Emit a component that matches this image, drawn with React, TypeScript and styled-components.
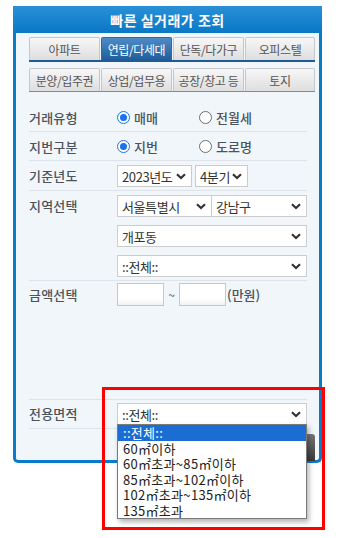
import styled, { createGlobalStyle } from "styled-components";

const GlobalStyle = createGlobalStyle`
  html, body {
    margin: 0;
    padding: 0;
    background: #ffffff;
  }
  body {
    font-family: "Noto Sans CJK KR", "Noto Sans", sans-serif;
  }
`;

const Page = styled.div`
  position: relative;
  width: 347px;
  height: 538px;
  overflow: hidden;
  padding-top: 6px;
  box-sizing: border-box;
`;

const Panel = styled.div`
  margin-left: 13px;
  width: 309px;
  height: 457px;
  box-sizing: border-box;
  border: 3px solid #0a7bc8;
  border-top: none;
  border-radius: 0 0 5px 5px;
  background: #f1f6fa;
`;

const Header = styled.div`
  height: 27px;
  margin: 0 -3px;
  display: flex;
  align-items: center;
  justify-content: center;
  background: linear-gradient(#2990d6, #0a78c6);
  color: #ffffff;
  font-size: 14px;
  font-weight: 700;
  letter-spacing: 0.5px;
`;

const Body = styled.div`
  padding: 4px 0 0 13px;
  width: 286px;
`;

const TabRow = styled.div<{ $line: string; $thick: number }>`
  display: grid;
  grid-template-columns: 71px 71px 71px 70px;
  gap: 1px;
  border-bottom: ${(p) => p.$thick}px solid ${(p) => p.$line};
  margin-bottom: 6px;
`;

const Tab = styled.div<{ $active?: boolean }>`
  height: 23px;
  box-sizing: border-box;
  display: flex;
  align-items: center;
  justify-content: center;
  font-size: 12px;
  letter-spacing: -0.4px;
  border: 1px solid ${(p) => (p.$active ? "#2a6aa8" : "#c4c8cc")};
  border-bottom: none;
  border-radius: 2px 2px 0 0;
  color: ${(p) => (p.$active ? "#ffffff" : "#555555")};
  background: ${(p) =>
    p.$active
      ? "linear-gradient(#4f8cc6, #1f5e9c)"
      : "linear-gradient(#f7f7f7, #dedede)"};
`;

/* margin collapses with the tab row's 6px, so this gives 11px */
const Form = styled.div`
  margin-top: 11px;
  width: 278px;
`;

const Row = styled.div<{ $height?: number; $top?: number }>`
  display: flex;
  align-items: flex-start;
  padding: ${(p) => p.$top ?? 4}px 0 3px;
  border-bottom: 1px solid #dde3e9;
  ${(p) => (p.$height ? `height: ${p.$height}px; box-sizing: border-box;` : "")}
`;

const Label = styled.div<{ $h?: number }>`
  width: 88px;
  flex: none;
  height: ${(p) => p.$h ?? 21}px;
  line-height: ${(p) => p.$h ?? 21}px;
  font-size: 13px;
  font-weight: 500;
  color: #4c535b;
  letter-spacing: 0.2px;
`;

const Controls = styled.div<{ $column?: boolean }>`
  flex: 1;
  display: flex;
  flex-direction: ${(p) => (p.$column ? "column" : "row")};
  align-items: ${(p) => (p.$column ? "stretch" : "center")};
  gap: ${(p) => (p.$column ? "8px" : "3px")};
`;

const RadioOpt = styled.label`
  width: 79px;
  height: 21px;
  display: flex;
  align-items: center;
  gap: 4px;
  font-size: 13px;
  font-weight: 500;
  color: #4c535b;
`;

const RadioDot = styled.span<{ $on?: boolean }>`
  width: 13px;
  height: 13px;
  border-radius: 50%;
  box-sizing: border-box;
  border: 1px solid ${(p) => (p.$on ? "#1a73e8" : "#6f6f6f")};
  background: #ffffff;
  display: flex;
  align-items: center;
  justify-content: center;
  &::after {
    content: "";
    display: ${(p) => (p.$on ? "block" : "none")};
    width: 7px;
    height: 7px;
    border-radius: 50%;
    background: #1a73e8;
  }
`;

const SelectBox = styled.div<{ $w?: number; $joined?: boolean }>`
  position: relative;
  width: ${(p) => (p.$w ? `${p.$w}px` : "auto")};
  height: 22px;
  box-sizing: border-box;
  border: 1px solid #cccccc;
  ${(p) => (p.$joined ? "border-left: none;" : "")}
  background: #ffffff;
  display: flex;
  align-items: center;
  justify-content: space-between;
  padding: 0 5px 0 4px;
  font-size: 13px;
  letter-spacing: -0.4px;
  color: #333333;
  white-space: nowrap;
`;

const Pair = styled.div`
  display: flex;
`;

const Chevron = () => (
  <svg width="10" height="7" viewBox="0 0 10 7" style={{ flex: "none" }}>
    <path d="M1 1.2 L5 5 L9 1.2" fill="none" stroke="#333" strokeWidth="2.2" />
  </svg>
);

const AmountInput = styled.div`
  width: 47px;
  height: 23px;
  box-sizing: border-box;
  border: 1px solid #c8c8c8;
  background: linear-gradient(#ffffff 70%, #eef1f4);
`;

const Tilde = styled.span`
  width: 9px;
  text-align: center;
  font-size: 12px;
  color: #555;
`;

const Unit = styled.span`
  font-size: 13px;
  font-weight: 500;
  color: #4c535b;
  margin-left: -2px;
`;

const ButtonRow = styled.div`
  display: flex;
  justify-content: flex-end;
  margin-top: 5px;
`;

const SearchButton = styled.div`
  width: 110px;
  height: 27px;
  border-radius: 3px 3px 0 0;
  background: linear-gradient(#777777, #3a3a3a);
`;

const DropList = styled.div`
  position: absolute;
  left: -1px;
  right: -1px;
  top: 20px;
  z-index: 3;
  background: #ffffff;
  border: 1px solid #7a7a7a;
  box-shadow: 2px 3px 5px rgba(0, 0, 0, 0.3);
`;

const DropItem = styled.div<{ $sel?: boolean }>`
  height: 15.5px;
  display: flex;
  align-items: center;
  padding-left: 5px;
  font-size: 13px;
  line-height: 1;
  letter-spacing: 0.3px;
  color: ${(p) => (p.$sel ? "#ffffff" : "#222222")};
  background: ${(p) => (p.$sel ? "#1c6dd3" : "transparent")};
`;

const Highlight = styled.div`
  position: absolute;
  left: 102px;
  top: 387px;
  width: 223px;
  height: 143px;
  box-sizing: border-box;
  border: 3px solid #ff0000;
  z-index: 4;
  pointer-events: none;
`;

const tabsTop = ["아파트", "연립/다세대", "단독/다가구", "오피스텔"];
const tabsBottom = ["분양/입주권", "상업/업무용", "공장/창고 등", "토지"];
const areas = [
  "::전체::",
  "60㎡이하",
  "60㎡초과~85㎡이하",
  "85㎡초과~102㎡이하",
  "102㎡초과~135㎡이하",
  "135㎡초과",
];

export default function App() {
  return (
    <Page>
      <GlobalStyle />
      <Panel>
        <Header>빠른 실거래가 조회</Header>
        <Body>
          <TabRow $line="#1f5a94" $thick={2}>
            {tabsTop.map((t) => (
              <Tab key={t} $active={t === "연립/다세대"}>
                {t}
              </Tab>
            ))}
          </TabRow>
          <TabRow $line="#6f8eb0" $thick={1}>
            {tabsBottom.map((t) => (
              <Tab key={t}>{t}</Tab>
            ))}
          </TabRow>

          <Form>
            <Row>
              <Label>거래유형</Label>
              <Controls>
                <RadioOpt>
                  <RadioDot $on />
                  매매
                </RadioOpt>
                <RadioOpt>
                  <RadioDot />
                  전월세
                </RadioOpt>
              </Controls>
            </Row>
            <Row>
              <Label>지번구분</Label>
              <Controls>
                <RadioOpt>
                  <RadioDot $on />
                  지번
                </RadioOpt>
                <RadioOpt>
                  <RadioDot />
                  도로명
                </RadioOpt>
              </Controls>
            </Row>
            <Row>
              <Label>기준년도</Label>
              <Controls>
                <SelectBox $w={75}>
                  2023년도 <Chevron />
                </SelectBox>
                <SelectBox $w={53}>
                  4분기 <Chevron />
                </SelectBox>
              </Controls>
            </Row>
            <Row>
              <Label>지역선택</Label>
              <Controls $column>
                <Pair>
                  <SelectBox $w={95}>
                    서울특별시 <Chevron />
                  </SelectBox>
                  <SelectBox $w={95} $joined>
                    강남구 <Chevron />
                  </SelectBox>
                </Pair>
                <SelectBox>
                  개포동 <Chevron />
                </SelectBox>
                <SelectBox>
                  ::전체:: <Chevron />
                </SelectBox>
              </Controls>
            </Row>
            <Row $height={119} $top={2}>
              <Label $h={23}>금액선택</Label>
              <Controls>
                <AmountInput />
                <Tilde>~</Tilde>
                <AmountInput />
                <Unit>(만원)</Unit>
              </Controls>
            </Row>
            <Row $top={3}>
              <Label>전용면적</Label>
              <Controls $column>
                <SelectBox>
                  ::전체:: <Chevron />
                  <DropList>
                    {areas.map((a, i) => (
                      <DropItem key={a} $sel={i === 0}>
                        {a}
                      </DropItem>
                    ))}
                  </DropList>
                </SelectBox>
              </Controls>
            </Row>
          </Form>
          <ButtonRow>
            <SearchButton />
          </ButtonRow>
        </Body>
      </Panel>
      <Highlight />
    </Page>
  );
}
